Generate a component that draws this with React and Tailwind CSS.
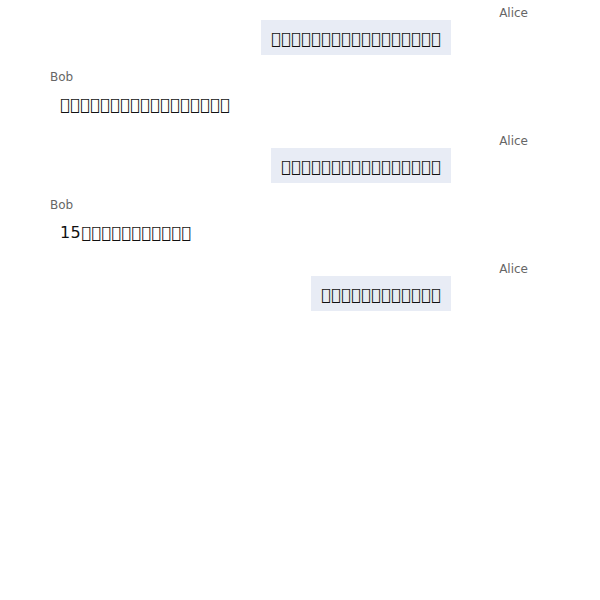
const box = (n) => '\uE000'.repeat(n);

const messages = [
  { from: 'Alice', text: box(17) },
  { from: 'Bob', text: box(17) },
  { from: 'Alice', text: box(16) },
  { from: 'Bob', text: '15' + box(11) },
  { from: 'Alice', text: box(12) },
];

const Message = ({ from, text }) => {
  const mine = from === 'Alice';
  return (
    <div className={`flex flex-col mb-[16px] ${mine ? 'items-end' : 'items-start'}`}>
      <div className={`text-[12px] leading-[13px] text-[#666666] ${mine ? 'mr-[72px]' : 'ml-[50px]'}`}>
        {from}
      </div>
      <div
        className={`px-[10px] pt-[10px] pb-[7px] text-[16px] leading-[18px] tracking-[0.4px] text-[#111111] ${
          mine ? 'mr-[149px] bg-[#e8ecf5]' : 'ml-[50px] mt-[2px] mb-[-2px]'
        }`}
      >
        {text}
      </div>
    </div>
  );
};

export default function App() {
  return (
    <div
      className="w-[600px] h-[600px] bg-white pt-[7px]"
      style={{ fontFamily: '"DejaVu Sans", sans-serif' }}
    >
      {messages.map((m, i) => (
        <Message key={i} {...m} />
      ))}
    </div>
  );
}
